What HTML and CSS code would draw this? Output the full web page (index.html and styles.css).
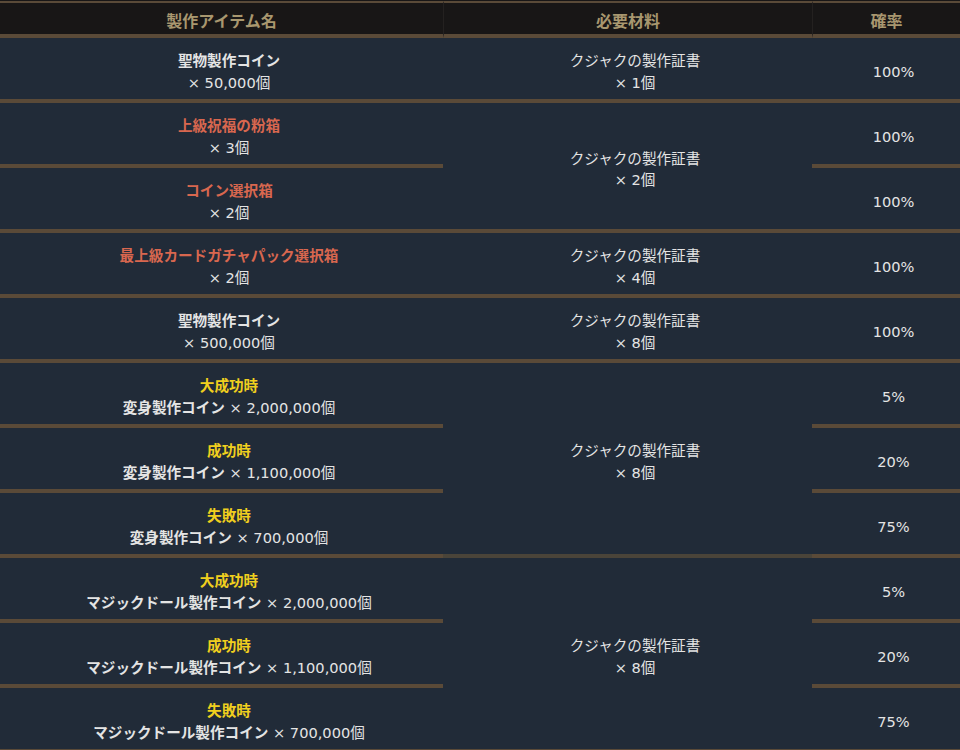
FILE: index.html
```html
<!DOCTYPE html>
<html lang="ja">
<head>
<meta charset="utf-8">
<title>製作</title>
<link rel="stylesheet" href="styles.css">
</head>
<body>
<table class="craft">
  <colgroup>
    <col class="c-item">
    <col class="c-mat">
    <col class="c-rate">
  </colgroup>
  <thead>
    <tr>
      <th>製作アイテム名</th>
      <th class="div">必要材料</th>
      <th class="div">確率</th>
    </tr>
  </thead>
  <tbody>
    <tr>
      <td><b>聖物製作コイン</b><br>× 50,000個</td>
      <td>クジャクの製作証書<br>× 1個</td>
      <td>100%</td>
    </tr>
    <tr>
      <td><b class="red">上級祝福の粉箱</b><br>× 3個</td>
      <td rowspan="2">クジャクの製作証書<br>× 2個</td>
      <td>100%</td>
    </tr>
    <tr>
      <td><b class="red">コイン選択箱</b><br>× 2個</td>
      <td>100%</td>
    </tr>
    <tr>
      <td><b class="red">最上級カードガチャパック選択箱</b><br>× 2個</td>
      <td>クジャクの製作証書<br>× 4個</td>
      <td>100%</td>
    </tr>
    <tr>
      <td><b>聖物製作コイン</b><br>× 500,000個</td>
      <td>クジャクの製作証書<br>× 8個</td>
      <td>100%</td>
    </tr>
    <tr>
      <td><b class="yel">大成功時</b><br><b>変身製作コイン</b> × 2,000,000個</td>
      <td rowspan="3" class="grey">クジャクの製作証書<br>× 8個</td>
      <td>5%</td>
    </tr>
    <tr>
      <td><b class="yel">成功時</b><br><b>変身製作コイン</b> × 1,100,000個</td>
      <td>20%</td>
    </tr>
    <tr>
      <td><b class="yel">失敗時</b><br><b>変身製作コイン</b> × 700,000個</td>
      <td>75%</td>
    </tr>
    <tr>
      <td><b class="yel">大成功時</b><br><b>マジックドール製作コイン</b> × 2,000,000個</td>
      <td rowspan="3">クジャクの製作証書<br>× 8個</td>
      <td>5%</td>
    </tr>
    <tr>
      <td><b class="yel">成功時</b><br><b>マジックドール製作コイン</b> × 1,100,000個</td>
      <td>20%</td>
    </tr>
    <tr>
      <td><b class="yel">失敗時</b><br><b>マジックドール製作コイン</b> × 700,000個</td>
      <td>75%</td>
    </tr>
  </tbody>
</table>
</body>
</html>
```

FILE: styles.css
```css
html, body {
  margin: 0;
  padding: 0;
  background: #181616;
}

body {
  font-family: "DejaVu Sans", "Noto Sans CJK JP", sans-serif;
  color: #e4e4e4;
  padding-top: 1px;
}

.craft {
  width: 960px;
  table-layout: fixed;
  border-collapse: separate;
  border-spacing: 0;
}

.c-item { width: 443px; }
.c-mat { width: 369px; }
.c-rate { width: 148px; }

.craft th {
  background: #181616;
  color: #a8976f;
  font-size: 16px;
  font-weight: 700;
  line-height: 22px;
  height: 24px;
  padding: 7px 0 0;
  border-top: 2px solid #5a4a38;
  border-bottom: 4px solid #5a4a38;
  text-align: center;
}

.craft th.div {
  border-left: 1px solid #242120;
}

.craft td {
  background: #212b38;
  font-size: 14.6px;
  line-height: 21.5px;
  height: 55px;
  padding: 6px 0 0 15px;
  border-bottom: 4px solid #5a4a38;
  text-align: center;
  vertical-align: middle;
}

.craft td.grey {
  border-bottom-color: #4a4439;
}

.craft b {
  font-weight: 700;
}

.red { color: #d8674f; }
.yel { color: #f0cf1e; }
```
